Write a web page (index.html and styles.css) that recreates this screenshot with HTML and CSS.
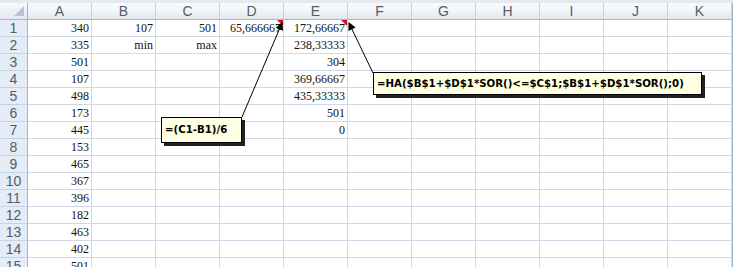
FILE: index.html
```html
<!DOCTYPE html>
<html lang="hu">
<head>
  <meta charset="UTF-8" />
  <title>Munka1</title>
  <link rel="stylesheet" href="styles.css">
</head>
<body>
  <div class="topbar"></div>

  <div class="sheet" id="sheet">
    <!-- cells get built by the script below -->
  </div>

  <div class="note note-d">=(C1-B1)/6</div>
  <div class="note note-e">=HA($B$1+$D$1*SOR()&lt;=$C$1;$B$1+$D$1*SOR();0)</div>

  <svg class="arrows" width="733" height="267" viewBox="0 0 733 267">
    <defs>
      <marker id="head" markerWidth="8" markerHeight="8" refX="7" refY="4" orient="auto" markerUnits="userSpaceOnUse">
        <path d="M0,0 L8,4 L0,8 Z" fill="#000" />
      </marker>
    </defs>
    <line x1="242" y1="117" x2="282" y2="23" stroke="#000" stroke-width="1" marker-end="url(#head)" />
    <line x1="373" y1="73" x2="349" y2="23" stroke="#000" stroke-width="1" marker-end="url(#head)" />
  </svg>

  <script>
    const cols = ["A", "B", "C", "D", "E", "F", "G", "H", "I", "J", "K"];
    const data = {
      A: [340, 335, 501, 107, 498, 173, 445, 153, 465, 367, 396, 182, 463, 402, 501],
      B: ["107", "min"],
      C: ["501", "max"],
      D: ["65,666667"],
      E: ["172,66667", "238,33333", "304", "369,66667", "435,33333", "501", "0"]
    };
    const comments = ["D1", "E1"];

    const sheet = document.getElementById("sheet");

    function addCell(cls, text) {
      const cell = document.createElement("div");
      cell.className = cls;
      cell.textContent = text;
      sheet.appendChild(cell);
      return cell;
    }

    addCell("corner", "");
    cols.forEach(c => addCell("colhead", c));

    for (let r = 1; r <= 15; r++) {
      addCell("rowhead", r);
      cols.forEach(c => {
        const val = data[c] && data[c][r - 1] !== undefined ? data[c][r - 1] : "";
        const cell = addCell("cell", val);
        if (comments.includes(c + r)) cell.classList.add("has-note");
      });
    }
  </script>
</body>
</html>
```

FILE: styles.css
```css
body {
  margin: 0;
  width: 733px;
  height: 267px;
  overflow: hidden;
  background: #fff;
  position: relative;
  font-family: 'Liberation Serif', 'Times New Roman', serif;
}

.topbar {
  height: 3px;
  background: #e6e9ee;
}

.sheet {
  display: grid;
  grid-template-columns: 28px repeat(11, 64px);
  grid-auto-rows: 17px;
  border-right: 1px solid #9eb6ce;
  width: 732px;
}

.corner {
  background: linear-gradient(#f9fafc, #e3e8ef);
  border-right: 1px solid #9eb6ce;
  border-bottom: 1px solid #9eb6ce;
  box-sizing: border-box;
  position: relative;
}

.corner::after {
  content: "";
  position: absolute;
  right: 3px;
  bottom: 3px;
  border-left: 10px solid transparent;
  border-bottom: 10px solid #b4c3d7;
}

.colhead {
  background: linear-gradient(#f9fafc 0%, #f1f4f8 50%, #e2e7ee 100%);
  border-right: 1px solid #c6d1e0;
  border-bottom: 1px solid #9eb6ce;
  box-sizing: border-box;
  text-align: center;
  font-family: 'Liberation Sans', Arial, sans-serif;
  font-size: 14px;
  line-height: 17px;
  color: #545d6a;
}

.rowhead {
  background: #e4ecf7;
  border-right: 1px solid #9eb6ce;
  border-bottom: 1px solid #c5d2e3;
  box-sizing: border-box;
  text-align: center;
  font-family: 'Liberation Sans', Arial, sans-serif;
  font-size: 14px;
  line-height: 17px;
  color: #545d6a;
}

.cell {
  border-right: 1px solid #d0d7e5;
  border-bottom: 1px solid #d0d7e5;
  box-sizing: border-box;
  text-align: right;
  padding-right: 2px;
  font-size: 12px;
  line-height: 17px;
  color: #111;
  white-space: nowrap;
  position: relative;
}

.cell.has-note::after {
  content: "";
  position: absolute;
  top: 0;
  right: 0;
  border-left: 6px solid transparent;
  border-top: 6px solid #d0101c;
}

.note {
  position: absolute;
  background: #ffffe1;
  border: 1px solid #000;
  box-shadow: 3px 3px 0 #222;
  font-family: 'DejaVu Sans', Verdana, sans-serif;
  font-weight: bold;
  font-size: 10.2px;
  color: #000;
  white-space: nowrap;
  box-sizing: border-box;
  padding-left: 3px;
}

.note-d {
  left: 161px;
  top: 117px;
  width: 81px;
  height: 26px;
  line-height: 24px;
}

.note-e {
  left: 373px;
  top: 72px;
  width: 329px;
  height: 23px;
  line-height: 21px;
}

.arrows {
  position: absolute;
  left: 0;
  top: 0;
  pointer-events: none;
}
```
